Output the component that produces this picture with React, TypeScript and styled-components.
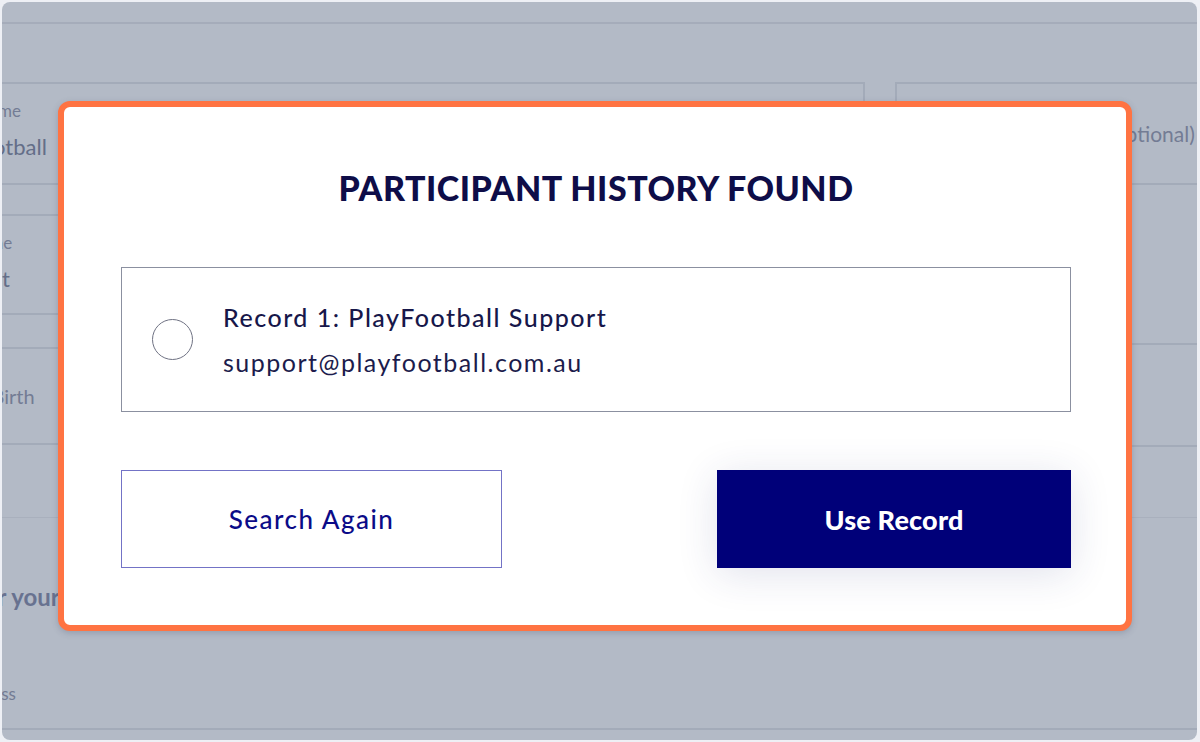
import React from "react";
import styled, { createGlobalStyle } from "styled-components";

const Global = createGlobalStyle`
  html, body { margin: 0; padding: 0; }
  body {
    background: #eef0f5;
    font-family: Lato, "Liberation Sans", sans-serif;
  }
`;

const Screen = styled.div`
  width: 1200px;
  height: 742px;
  padding: 2px 3px 2px 2px;
  box-sizing: border-box;
`;

const Frame = styled.div`
  position: relative;
  width: 100%;
  height: 100%;
  background: #b3bac6;
  border-radius: 8px;
  overflow: hidden;
  display: flex;
  flex-direction: column;
`;

const TopBar = styled.div`
  height: 20px;
  flex-shrink: 0;
  border-bottom: 2px solid #a5acba;
`;

const Form = styled.div`
  margin-top: 58px;
  display: flex;
  flex-direction: column;
`;

const Columns = styled.div`
  display: grid;
  grid-template-columns: 948px 1fr;
  column-gap: 30px;
  margin-left: -85px;
  margin-right: -30px;
  align-items: start;
`;

const Column = styled.div`
  display: flex;
  flex-direction: column;
`;

const FieldBox = styled.div<{ $h: number; $top?: number; $center?: boolean; $pad: number }>`
  box-sizing: border-box;
  height: ${(p) => p.$h}px;
  margin-top: ${(p) => p.$top ?? 0}px;
  border: 2px solid #a3abb9;
  padding: ${(p) => (p.$center ? "0" : "14px")} 0 0 ${(p) => p.$pad}px;
  display: flex;
  flex-direction: column;
  justify-content: ${(p) => (p.$center ? "center" : "flex-start")};
  white-space: nowrap;
`;

const FieldLabel = styled.div<{ $size?: number }>`
  font-size: ${(p) => p.$size ?? 17}px;
  line-height: 26px;
  color: #737c94;
`;

const FieldValue = styled.div`
  font-size: 22px;
  line-height: 30px;
  margin-top: 8px;
  color: #646e88;
`;

const Divider = styled.div`
  margin-top: 70px;
  height: 1px;
  background: #a9b0bd;
`;

const Section = styled.div`
  display: flex;
  flex-direction: column;
  margin-left: -53px;
  white-space: nowrap;
`;

const SectionTitle = styled.div`
  margin-top: 63px;
  font-size: 24px;
  line-height: 32px;
  font-weight: 700;
  color: #687290;
`;

const SectionLabel = styled.div`
  margin-top: 69px;
  margin-left: 7px;
  font-size: 17px;
  line-height: 24px;
  color: #737c94;
`;

const SectionLine = styled.div`
  margin-top: 22px;
  height: 2px;
  background: #a3abb9;
`;

/* ---------- modal ---------- */

const Modal = styled.div`
  position: absolute;
  left: 56px;
  top: 99px;
  width: 1074px;
  height: 530px;
  box-sizing: border-box;
  border: 6px solid #ff7342;
  border-radius: 12px;
  background: #ffffff;
  padding: 63px 55px 57px 57px;
  display: flex;
  flex-direction: column;
  box-shadow: 0 2px 6px rgba(60, 70, 100, 0.25);
`;

const Title = styled.h2`
  margin: 0;
  font-family: Lato, "Liberation Sans", sans-serif;
  font-size: 34px;
  line-height: 36px;
  font-weight: 900;
  text-align: center;
  color: #0e0d48;
  letter-spacing: 0.5px;
`;

const RecordBox = styled.label`
  margin-top: 61px;
  height: 145px;
  box-sizing: border-box;
  border: 1px solid #8b90a0;
  display: flex;
  align-items: center;
  padding-left: 30px;
  cursor: pointer;
`;

const Radio = styled.span`
  width: 41px;
  height: 41px;
  box-sizing: border-box;
  border-radius: 50%;
  border: 1.5px solid #6f7283;
  flex-shrink: 0;
`;

const RecordText = styled.div`
  margin-left: 30px;
  display: flex;
  flex-direction: column;
  gap: 13px;
`;

const RecordLine = styled.div<{ $strong?: boolean }>`
  font-size: 25px;
  line-height: 32px;
  letter-spacing: 1.5px;
  font-weight: ${(p) => (p.$strong ? 500 : 400)};
  color: ${(p) => (p.$strong ? "#17174a" : "#1c1c4c")};
`;

const Actions = styled.div`
  margin-top: 58px;
  display: flex;
  justify-content: space-between;
`;

const Button = styled.button<{ $primary?: boolean; $w: number }>`
  width: ${(p) => p.$w}px;
  height: 98px;
  box-sizing: border-box;
  font-family: Lato, "Liberation Sans", sans-serif;
  font-size: ${(p) => (p.$primary ? 27 : 26)}px;
  cursor: pointer;
  border: 1px solid ${(p) => (p.$primary ? "#000079" : "#7373c6")};
  background: ${(p) => (p.$primary ? "#000079" : "#ffffff")};
  color: ${(p) => (p.$primary ? "#ffffff" : "#0b0b88")};
  font-weight: ${(p) => (p.$primary ? 900 : 500)};
  letter-spacing: ${(p) => (p.$primary ? "0.2px" : "1.5px")};
  box-shadow: ${(p) => (p.$primary ? "0 6px 40px rgba(40, 50, 120, 0.14)" : "none")};
`;

export default function App() {
  return (
    <>
      <Global />
      <Screen>
        <Frame>
          <TopBar />
          <Form>
            <Columns>
              <Column>
                <FieldBox $h={103} $pad={10}>
                  <FieldLabel>Given Name</FieldLabel>
                  <FieldValue>PlayFootball</FieldValue>
                </FieldBox>
                <FieldBox $h={101} $top={29} $pad={14}>
                  <FieldLabel>Last Name</FieldLabel>
                  <FieldValue>Support</FieldValue>
                </FieldBox>
                <FieldBox $h={98} $top={32} $pad={2} $center>
                  <FieldLabel $size={20}>Date of Birth</FieldLabel>
                </FieldBox>
              </Column>
              <Column>
                <FieldBox $h={103} $pad={60} $center>
                  <FieldLabel $size={21}>Preferred Name (optional)</FieldLabel>
                </FieldBox>
                <FieldBox $h={104} $top={158} $pad={60} />
              </Column>
            </Columns>
            <Divider />
            <Section>
              <SectionTitle>Enter your address</SectionTitle>
              <SectionLabel>Address</SectionLabel>
              <SectionLine />
            </Section>
          </Form>

          <Modal role="dialog" aria-modal="true">
            <Title>PARTICIPANT HISTORY FOUND</Title>
            <RecordBox>
              <Radio />
              <RecordText>
                <RecordLine $strong>Record 1: PlayFootball Support</RecordLine>
                <RecordLine>support@playfootball.com.au</RecordLine>
              </RecordText>
            </RecordBox>
            <Actions>
              <Button $w={381}>Search Again</Button>
              <Button $w={354} $primary>
                Use Record
              </Button>
            </Actions>
          </Modal>
        </Frame>
      </Screen>
    </>
  );
}
